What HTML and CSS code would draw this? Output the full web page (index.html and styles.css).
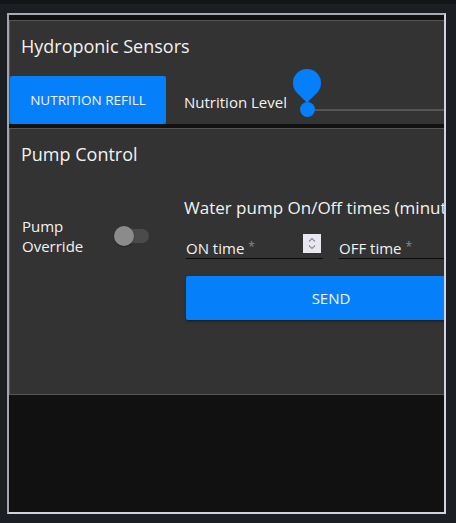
FILE: index.html
```html
<!DOCTYPE html>
<html>
<head>
<meta charset="utf-8">
<link rel="stylesheet" href="styles.css">
</head>
<body>
<div class="topbar"></div>
<div class="frame">
  <section class="card card-sensors">
    <h2 class="card-title">Hydroponic Sensors</h2>
    <div class="sensor-row">
      <button class="btn btn-refill">NUTRITION REFILL</button>
      <span class="level-label">Nutrition Level</span>
      <div class="slider">
        <div class="slider-track"></div>
        <div class="slider-thumb"></div>
        <div class="slider-drop"></div>
      </div>
    </div>
  </section>
  <section class="card card-pump">
    <h2 class="card-title">Pump Control</h2>
    <div class="pump-body">
      <div class="override">
        <span class="override-label">Pump Override</span>
        <span class="switch"><span class="switch-track"></span><span class="switch-thumb"></span></span>
      </div>
      <div class="times">
        <h3 class="times-title">Water pump On/Off times (minutes)</h3>
        <div class="fields">
          <div class="field field-on">
            <span class="field-label">ON time<span class="req">*</span></span>
            <span class="spinner">
              <svg width="18" height="19" viewBox="0 0 18 19"><path d="M6 7.5 L9 4.5 L12 7.5" fill="none" stroke="#8c8c94" stroke-width="1.1"/><path d="M6 11.5 L9 14.5 L12 11.5" fill="none" stroke="#8c8c94" stroke-width="1.1"/></svg>
            </span>
          </div>
          <div class="field field-off">
            <span class="field-label">OFF time<span class="req">*</span></span>
          </div>
        </div>
        <button class="btn btn-send">SEND</button>
      </div>
    </div>
  </section>
</div>
</body>
</html>
```

FILE: styles.css
```css
* { box-sizing: border-box; }
html, body { margin: 0; padding: 0; }
body {
  background: #1b1e22;
  width: 456px;
  height: 523px;
  overflow: hidden;
  font-family: "Open Sans", "Noto Sans", sans-serif;
  color: #f2f2f2;
}
.topbar {
  height: 4px;
  background: #131519;
}
.frame {
  margin: 9px 0 0 7px;
  width: 439px;
  height: 501px;
  border: 2px solid;
  border-color: #aaaab2 #d2d2e0 #d2d2e0 #a4a4ac;
  background: #111111;
  overflow: hidden;
  padding-top: 5px;
}
.card {
  width: 520px;
  background: #333333;
  border: 1px solid #555555;
  border-right: none;
}
.card-sensors {
  height: 104px;
  border-bottom: none;
}
.card-pump {
  margin-top: 4px;
  height: 267px;
}
.card-title {
  margin: 0;
  font-weight: 400;
  font-size: 18px;
  line-height: 24px;
  padding-left: 11px;
}
.card-sensors .card-title { padding-top: 13px; }
.card-pump .card-title { padding-top: 13px; }

.sensor-row {
  margin-top: 18px;
  height: 48px;
  display: flex;
  align-items: center;
}
.btn {
  border: none;
  background: #0680fa;
  color: #f4f4fb;
  font-family: "Open Sans", "Noto Sans", sans-serif;
  font-weight: 400;
  padding: 0;
  border-radius: 2px;
  cursor: pointer;
}
.btn-refill {
  width: 156px;
  height: 48px;
  font-size: 13.5px;
  align-self: stretch;
}
.level-label {
  margin-left: 18px;
  font-size: 15px;
  line-height: 20px;
  padding-top: 3px;
}
.slider {
  position: relative;
  flex: 1;
  height: 48px;
  margin-left: 13px;
}
.slider-track {
  position: absolute;
  left: 7px;
  right: 0;
  top: 33px;
  height: 2px;
  background: #555555;
}
.slider-thumb {
  position: absolute;
  left: 0;
  top: 26px;
  width: 15px;
  height: 15px;
  border-radius: 50%;
  background: #0680fa;
}
.slider-drop {
  position: absolute;
  left: -6.5px;
  top: -7px;
  width: 28px;
  height: 28px;
  background: #0680fa;
  border-radius: 50% 50% 0 50%;
  transform: rotate(45deg);
}

.pump-body {
  display: flex;
  align-items: flex-start;
  padding-left: 12px;
  margin-top: 30px;
}
.override {
  width: 162px;
  display: flex;
  align-items: center;
  margin-top: 20px;
}
.override-label {
  width: 80px;
  font-size: 15px;
  line-height: 20px;
}
.switch {
  position: relative;
  margin-left: 12px;
  width: 36px;
  height: 20px;
}
.switch-track {
  position: absolute;
  left: 1px;
  top: 3px;
  width: 34px;
  height: 14px;
  border-radius: 7px;
  background: #4b4b4b;
}
.switch-thumb {
  position: absolute;
  left: 0;
  top: 0;
  width: 20px;
  height: 20px;
  border-radius: 50%;
  background: #8b8b8b;
  box-shadow: 0 1px 2px rgba(0,0,0,0.3);
}
.times {
  flex: none;
  width: 320px;
}
.times-title {
  margin: 0;
  font-weight: 400;
  font-size: 17px;
  line-height: 24px;
  white-space: nowrap;
}
.fields {
  display: flex;
  gap: 16px;
  margin-top: 6px;
  padding-left: 2px;
}
.field {
  width: 137px;
  height: 33px;
  border-bottom: 1px solid #0c0c0c;
  display: flex;
  align-items: flex-end;
  justify-content: space-between;
  padding-bottom: 0;
}
.field-off { width: 160px; }
.field-label {
  font-size: 15px;
  line-height: 20px;
}
.req {
  color: #8a8a8a;
  font-size: 12px;
  margin-left: 4px;
  vertical-align: 3px;
}
.spinner {
  align-self: flex-start;
  margin-top: 8px;
  margin-right: 2px;
  width: 18px;
  height: 19px;
  background: #e9e7ef;
  display: flex;
}
.btn-send {
  display: block;
  margin: 17px 0 0 2px;
  width: 290px;
  height: 44px;
  font-size: 15px;
  box-shadow: 0 3px 1px -2px rgba(0,0,0,0.2), 0 2px 2px 0 rgba(0,0,0,0.14), 0 1px 5px 0 rgba(0,0,0,0.12);
}
```
